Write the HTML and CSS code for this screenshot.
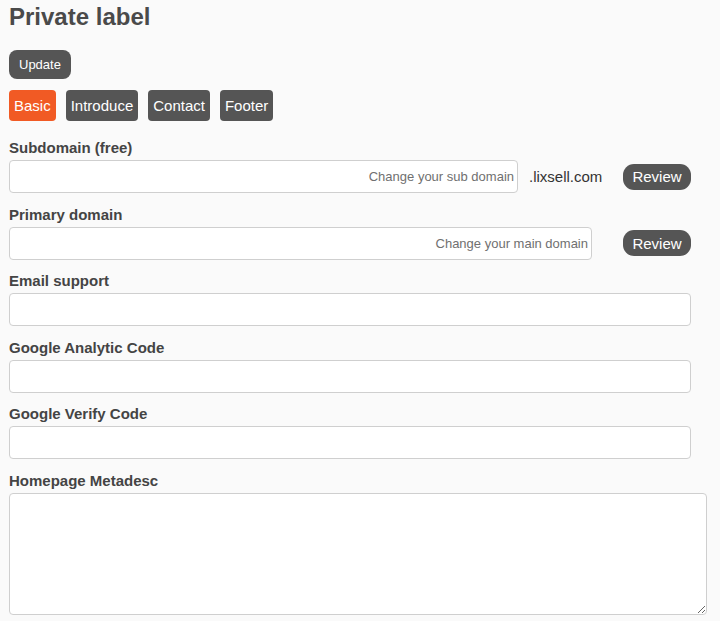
FILE: index.html
```html
<!DOCTYPE html>
<html>
<head>
<meta charset="utf-8">
<link rel="stylesheet" href="styles.css">
</head>
<body>
<div class="page">
  <h1 class="title">Private label</h1>
  <div class="actions"><button class="btn btn-update">Update</button></div>
  <div class="tabs">
    <button class="tab active">Basic</button>
    <button class="tab">Introduce</button>
    <button class="tab">Contact</button>
    <button class="tab">Footer</button>
  </div>
  <div class="field">
    <label class="label">Subdomain (free)</label>
    <div class="row">
      <input class="input input-sub" placeholder="Change your sub domain">
      <span class="suffix">.lixsell.com</span>
      <button class="btn btn-review">Review</button>
    </div>
  </div>
  <div class="field">
    <label class="label">Primary domain</label>
    <div class="row">
      <input class="input input-main" placeholder="Change your main domain">
      <button class="btn btn-review">Review</button>
    </div>
  </div>
  <div class="field">
    <label class="label">Email support</label>
    <input class="input input-full">
  </div>
  <div class="field">
    <label class="label">Google Analytic Code</label>
    <input class="input input-full">
  </div>
  <div class="field">
    <label class="label">Google Verify Code</label>
    <input class="input input-full">
  </div>
  <div class="field">
    <label class="label">Homepage Metadesc</label>
    <textarea class="input textarea"></textarea>
  </div>
</div>
</body>
</html>
```
FILE: styles.css
```css
* { box-sizing: border-box; }
html, body { margin: 0; padding: 0; background: #fafafa; }
body { font-family: "Liberation Sans", Arial, sans-serif; color: #444; overflow: hidden; }
.page { padding: 3px 9px 0 9px; width: 720px; }
.title { margin: 0; font-size: 24px; font-weight: bold; line-height: 28px; color: #4a4a4a; }
.actions { margin-top: 19px; display: flex; }
.btn { border: none; font-family: "Liberation Sans", Arial, sans-serif; color: #fff; background: #555; cursor: pointer; }
.btn-update { height: 29px; padding: 0 10px; font-size: 13px; border-radius: 8px; }
.tabs { display: flex; gap: 10px; margin-top: 11px; }
.tab { height: 31px; padding: 0 5px; font-size: 15px; border-radius: 4px; border: none; background: #555; color: #fff; font-family: "Liberation Sans", Arial, sans-serif; }
.tab.active { background: #f15a24; }
.field { display: flex; flex-direction: column; }
.tabs + .field { margin-top: 18px; }
.field + .field { margin-top: 12.5px; }
.label { font-size: 15px; font-weight: bold; line-height: 18px; height: 21px; color: #444; }
.row { display: flex; align-items: center; }
.input { height: 33px; border: 1px solid #cfcfcf; border-radius: 4px; background: #fff; font-family: "Liberation Sans", Arial, sans-serif; font-size: 13px; padding: 0 3px; outline: none; }
.input::placeholder { color: #707070; }
.input-sub { width: 509px; text-align: right; }
.input-main { width: 583px; text-align: right; }
.suffix { font-size: 15px; color: #333; margin-left: 11px; width: 94px; }
.input-main + .btn-review { margin-left: 31px; }
.btn-review { height: 26px; width: 68px; padding: 0; font-size: 15px; border-radius: 11px; }
.input-full { width: 682px; }
.textarea { width: 698px; height: 122px; resize: both; padding: 4px; }
```
